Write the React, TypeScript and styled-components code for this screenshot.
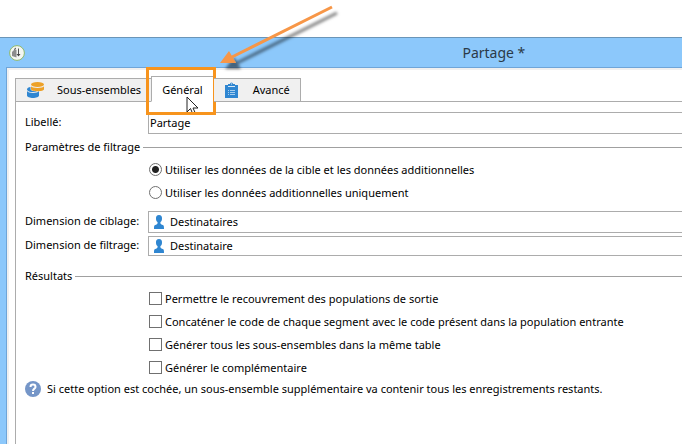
import React from "react";
import styled, { createGlobalStyle, css } from "styled-components";

const Global = createGlobalStyle`
  * { box-sizing: border-box; }
  body { margin: 0; background: #fff; }
  body, input, button { font: 11px/16px "Noto Sans", "Open Sans", sans-serif; color: #000; }
`;

const Page = styled.div`
  min-height: 100vh;
  padding-top: 37px;
  display: flex;
  flex-direction: column;
  overflow: hidden;
`;
const Window = styled.section`
  flex: 1;
  display: flex;
  flex-direction: column;
  background: #8cc8fb;
  border-top: 1px solid #6a95b8;
  padding-left: 6px;
`;
const TitleBar = styled.header`
  height: 29px;
  display: flex;
  align-items: center;
  padding-left: 3px;
`;
const Title = styled.h1`
  margin: 0 0 0 65%;
  font-size: 14px;
  line-height: 20px;
  font-weight: 400;
  color: #2b3a48;
  white-space: nowrap;
`;
const Client = styled.main`
  flex: 1;
  display: flex;
  flex-direction: column;
  background: #fff;
  border-top: 1px solid #6fa5d8;
  border-left: 1px solid #6fa5d8;
  box-shadow: inset 2px 2px 0 #f0f0f0;
  padding: 8px 0 0 8px;
`;
const Tabs = styled.div`
  display: flex;
  align-items: flex-end;
  margin-bottom: -1px;
`;
const Tab = styled.button<{ $active?: boolean }>`
  position: relative;
  display: flex;
  align-items: center;
  gap: 13px;
  height: 24px;
  padding: 0 10px 0 11px;
  border: 1px solid #acacac;
  background: #f0f0f0;
  white-space: nowrap;
  & + & { border-left: 0; }
  ${(p) =>
    p.$active &&
    css`
      height: 26px;
      margin-left: -1px;
      padding: 2px 10px 0;
      background: #fff;
      border-bottom-color: #fff;
      && { border-left: 1px solid #acacac; }
    `}
  &:last-child { gap: 15px; }
`;
const Highlight = styled.span`
  position: absolute;
  inset: -10px -3px -14px -6px;
  border: 3px solid #f7941d;
  pointer-events: none;
`;
const Cursor = styled.svg`
  position: absolute;
  left: 34px;
  top: 19px;
`;
const Arrow = styled.svg`
  position: absolute;
  left: 64px;
  top: -77px;
  overflow: visible;
  pointer-events: none;
`;
const Panel = styled.form`
  flex: 1;
  border-top: 1px solid #acacac;
  border-left: 1px solid #acacac;
  padding: 10px 0 0 9px;
`;
const Row = styled.div`
  display: grid;
  grid-template-columns: 123px 1fr;
  align-items: center;
  margin-bottom: 3px;
`;
const Label = styled.label`
  padding-bottom: 2px;
  white-space: nowrap;
`;
const Field = styled.div<{ $short?: boolean }>`
  display: flex;
  align-items: center;
  gap: 6px;
  height: ${(p) => (p.$short ? 20 : 22)}px;
  border: 1px solid #acacac;
  border-right: 0;
  padding-left: 5px;
`;
const TextBox = styled.input`
  flex: 1;
  min-width: 0;
  height: 18px;
  padding: 0 0 2px;
  border: 0;
  outline: 0;
  background: transparent;
`;
const PlainField = styled(Field)`
  padding-left: 1px;
`;
const Group = styled.fieldset<{ $results?: boolean }>`
  margin: ${(p) => (p.$results ? 12 : 5)}px 0 0;
  padding: 0 0 ${(p) => (p.$results ? 2 : 7)}px;
  border: 0;
  min-width: 0;
`;
const Legend = styled.legend`
  display: flex;
  align-items: center;
  gap: 3px;
  width: 100%;
  padding: 0;
  white-space: nowrap;
  &::after { content: ""; flex: 1; height: 1px; background: #a0a0a0; }
`;
const Options = styled.div`
  padding: 3px 0 0 124px;
`;
const Option = styled.label`
  display: flex;
  align-items: center;
  gap: 3px;
  height: 23px;
  white-space: nowrap;
`;
const Mark = styled.input`
  appearance: none;
  flex: none;
  width: 13px;
  height: 13px;
  margin: 0;
  border: 1px solid #707070;
  background: #fff;
  &[type="radio"] { border-radius: 50%; }
  &[type="radio"]:checked { background: radial-gradient(circle, #222 0 3px, #fff 4px); }
  &[type="checkbox"]:checked { background: #222; }
`;
const Hint = styled.p`
  display: flex;
  align-items: center;
  gap: 6px;
  margin: 0;
  white-space: nowrap;
`;

const AppIcon = () => (
  <svg width="16" height="16" viewBox="0 0 16 16" aria-hidden="true">
    <circle cx="8" cy="8" r="7.400" fill="#f4f6f2" stroke="#8fb86a" />
    <path d="M3 7l3-3 1.500 1v7.500L3 11z" fill="#8c8c8c" />
    <path d="M5 4.500l2-1.500M9.500 3.500V10" fill="none" stroke="#555" />
    <path d="M7.500 9l2 2.500 2-2.500z" fill="#444" />
  </svg>
);
const SetsIcon = () => (
  <svg width="17" height="16" viewBox="0 0 17 16" aria-hidden="true">
    <path d="M0 9c1 2.500 11 2.500 12 0v4.500c0 3.300-12 3.300-12 0z" fill="#2f86d1" />
    <path d="M0 7.500C0 6 1.500 5.300 3.500 5v2.500c.5 1.200 3 2 6.500 2-3 1.200-10 .5-10-2z" fill="#2f86d1" />
    <path d="M4 4.200c1 2.300 12 2.300 13 0v3c0 2.600-13 2.600-13 0z" fill="#eda128" />
    <ellipse cx="10.500" cy="2.600" rx="6.500" ry="2.500" fill="#eda128" />
  </svg>
);
const ClipboardIcon = () => (
  <svg width="13" height="16" viewBox="0 0 13 16" aria-hidden="true">
    <path fillRule="evenodd" d="M0 3h3V2h2a1.500 1.500 0 0 1 3 0h2v1h3v13H0zM6 1.500h1v1H6z" fill="#2f86d1" />
    <path d="M3 4.500h7" stroke="#d7e9f8" />
    <path d="M3 8.500h1m1 0h5M3 10.500h1m1 0h5M3 12.500h1m1 0h5" stroke="#a5cdee" />
  </svg>
);
const PersonIcon = () => (
  <svg width="10" height="14" viewBox="0 0 10 14" aria-hidden="true">
    <path d="M5 0C2.800 0 1.800 1.600 2 4c.1 1.600.7 2.500 1.400 3.100C4 8 3.500 9 2.500 9.400L.7 10.200C.1 10.500 0 12 0 14h10c0-2-.1-3.500-.7-3.800l-1.800-.8C6.500 9 6 8 6.600 7.100 7.300 6.500 7.900 5.600 8 4c.2-2.400-.8-4-3-4z" fill="#2f86d1" />
  </svg>
);
const HelpIcon = () => (
  <svg width="16" height="16" viewBox="0 0 16 16" aria-hidden="true">
    <circle cx="8" cy="8" r="8" fill="#7596c8" />
    <path d="M5.500 6C5.500 2.800 10.500 2.800 10.500 6 10.500 7.800 8 7.600 8 10" fill="none" stroke="#fff" strokeWidth="2" />
    <path d="M7 11h2v2H7z" fill="#fff" />
  </svg>
);

const outputs = [
  "Permettre le recouvrement des populations de sortie",
  "Concaténer le code de chaque segment avec le code présent dans la population entrante",
  "Générer tous les sous-ensembles dans la même table",
  "Générer le complémentaire",
];

export default function App() {
  return (
    <Page>
      <Global />
      <Window>
        <TitleBar>
          <AppIcon />
          <Title>Partage *</Title>
        </TitleBar>
        <Client>
          <Tabs role="tablist">
            <Tab type="button" role="tab"><SetsIcon />Sous-ensembles</Tab>
            <Tab type="button" role="tab" aria-selected $active>
              Général
              <Cursor width="13" height="20" viewBox="0 0 13 20" aria-hidden="true">
                <path d="M1 1v15l3.500-3.500 2.500 6 2.500-1-2.500-5.500h5z" fill="#fff" stroke="#222" />
              </Cursor>
              <Highlight />
              <Arrow width="124" height="72" viewBox="0 0 124 72" aria-hidden="true">
                <defs>
                  <filter id="shade" x="-20%" y="-20%" width="140%" height="150%">
                    <feDropShadow dx="5" dy="6" stdDeviation="1.500" floodColor="#000" floodOpacity=".5" />
                  </filter>
                </defs>
                <g filter="url(#shade)" fill="#f79646">
                  <path d="M116 7L16 57" stroke="#f79646" strokeWidth="3" />
                  <path d="M4 63l9-12 7 12z" />
                </g>
              </Arrow>
            </Tab>
            <Tab type="button" role="tab"><ClipboardIcon />Avancé</Tab>
          </Tabs>
          <Panel>
            <Row>
              <Label htmlFor="name">Libellé:</Label>
              <PlainField><TextBox id="name" defaultValue="Partage" /></PlainField>
            </Row>
            <Group>
              <Legend>Paramètres de filtrage</Legend>
              <Options>
                <Option><Mark type="radio" name="data" defaultChecked />Utiliser les données de la cible et les données additionnelles</Option>
                <Option><Mark type="radio" name="data" />Utiliser les données additionnelles uniquement</Option>
              </Options>
            </Group>
            <Row>
              <Label htmlFor="target">Dimension de ciblage:</Label>
              <Field><PersonIcon /><TextBox id="target" defaultValue="Destinataires" /></Field>
            </Row>
            <Row>
              <Label htmlFor="filter">Dimension de filtrage:</Label>
              <Field $short><PersonIcon /><TextBox id="filter" defaultValue="Destinataire" /></Field>
            </Row>
            <Group $results>
              <Legend>Résultats</Legend>
              <Options>
                {outputs.map((text) => (
                  <Option key={text}><Mark type="checkbox" />{text}</Option>
                ))}
              </Options>
            </Group>
            <Hint>
              <HelpIcon />
              Si cette option est cochée, un sous-ensemble supplémentaire va contenir tous les enregistrements restants.
            </Hint>
          </Panel>
        </Client>
      </Window>
    </Page>
  );
}
